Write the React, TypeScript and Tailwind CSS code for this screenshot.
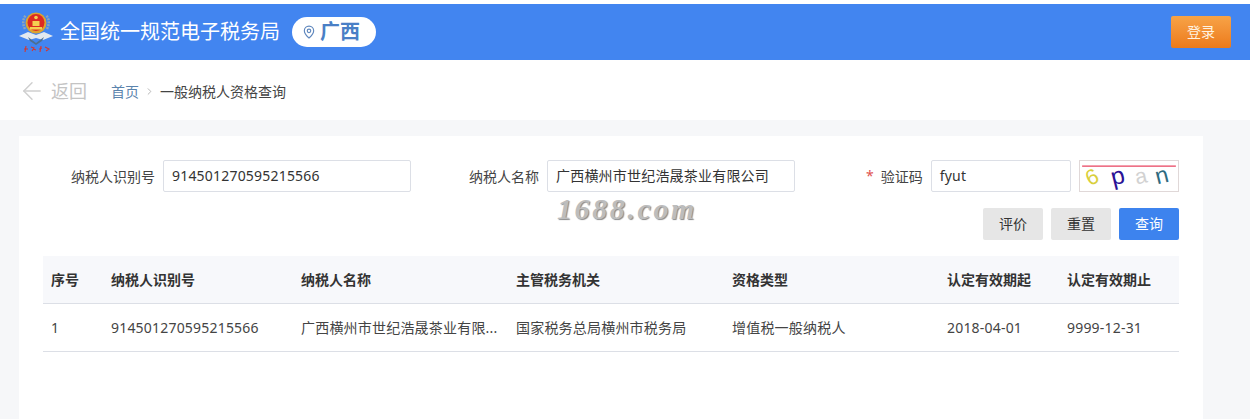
import React from 'react';
import { ArrowLeft, ChevronRight, MapPin } from 'lucide-react';

const FONT = 'font-["Noto_Sans","Noto_Sans_CJK_SC",sans-serif]';

const columns = ['序号', '纳税人识别号', '纳税人名称', '主管税务机关', '资格类型', '认定有效期起', '认定有效期止'];
const row = ['1', '914501270595215566', '广西横州市世纪浩晟茶业有限...', '国家税务总局横州市税务局', '增值税一般纳税人', '2018-04-01', '9999-12-31'];
const grid = 'grid grid-cols-[60px_190px_215px_216px_215px_120px_120px]';

const Emblem = () => (
  <svg width="34" height="46" viewBox="0 0 34 46" className="shrink-0">
    <path d="M6 20 Q2 12 7 6 M28 20 Q32 12 27 6" fill="none" stroke="#8fa6b8" strokeWidth="2.5" strokeDasharray="2 1" />
    <path d="M0 27 L9 23 L17 26 L25 23 L34 27 L24 31 L17 29 L10 31 Z" fill="#e3e9ef" />
    <path d="M9 28 L17 34 L25 28 L23 32 L17 36 L11 32 Z" fill="#4d6f90" />
    <circle cx="17" cy="14" r="10.5" fill="#dca32f" />
    <circle cx="17" cy="13.5" r="8.5" fill="#dd2a22" />
    <path d="M11 18 H23 V20.5 H11 Z" fill="#f4cf52" />
    <path d="M13.5 12 H20.5 V17 H13.5 Z" fill="#f4cf52" />
    <circle cx="17" cy="8.5" r="1.8" fill="#f4cf52" />
    <path d="M5 40 H9 M7 37 L6 43 M12 38 L15 39 L13 42 M14 40 L17 41 M20 40 L23 39 M22 37 L21 43 M26 38 L30 40 L27 42" stroke="#d9352b" strokeWidth="1.1" fill="none" />
  </svg>
);

const Captcha = () => (
  <svg width="100" height="32" viewBox="0 0 100 32" className="border border-[#e0d8d8] shrink-0 bg-white">
    <text transform="translate(8 27) rotate(-26)" fontFamily="Liberation Sans" fontSize="23" fill="#d9cf3c">6</text>
    <text transform="translate(33 26) rotate(-14)" fontFamily="Liberation Sans" fontSize="26" fill="#2a1296">p</text>
    <text transform="translate(58 25) rotate(-12)" fontFamily="Liberation Sans" fontSize="23" fill="#d2d2d2">a</text>
    <text transform="translate(80 25) rotate(-14)" fontFamily="Liberation Sans" fontSize="25" fill="#2f6b80">n</text>
    <path d="M0 5.5 H100" stroke="#e8425f" strokeWidth="1.5" />
  </svg>
);

const Field = ({ label, value, width, required }: { label: string; value: string; width: string; required?: boolean }) => (
  <div className="flex items-center">
    {required && <span className="text-[#e0524f] mr-[7px] text-sm">*</span>}
    <span className="text-[#444] text-[14px] mr-2 whitespace-nowrap">{label}</span>
    <div className={`${width} h-8 border border-[#dcdfe6] rounded-[2px] flex items-center px-2 pb-px text-[14px] text-[#333] tracking-[0.2px] bg-white`}>
      {value}
    </div>
  </div>
);

const App = () => {
  return (
    <div className={`${FONT} w-[1250px] h-[419px] overflow-hidden bg-[#f6f7f9] relative`}>
      <div className="h-1 bg-white" />
      <header className="h-14 bg-[#4285f0] flex items-center justify-between pl-[19px] pr-[19px]">
        <div className="flex items-center">
          <Emblem />
          <span className="text-white text-[20px] ml-[7px]">全国统一规范电子税务局</span>
          <div className="ml-3 w-[84px] h-[30px] bg-white rounded-full flex items-center pl-2.5 gap-1">
            <MapPin size={14} className="text-[#5f87bd]" />
            <span className="text-[#4a7fc6] text-[20px] font-semibold leading-none">广西</span>
          </div>
        </div>
        <button className="w-[60px] h-8 rounded-[2px] bg-gradient-to-b from-[#f7a346] to-[#ec7a18] text-[#fff3e0] text-sm">登录</button>
      </header>

      <div className="h-[60px] bg-white flex items-center pl-[18px] pt-[2px]">
        <ArrowLeft size={28} strokeWidth={1.25} className="text-[#cfcfcf]" />
        <span className="text-[#c4c4c4] text-lg ml-[5px]">返回</span>
        <span className="text-[#5b84ad] text-[14px] ml-6">首页</span>
        <ChevronRight size={11} className="text-[#b0b0b0] mx-[5px]" />
        <span className="text-[#444] text-[14px]">一般纳税人资格查询</span>
      </div>

      <main className="ml-[19px] mt-4 w-[1184px] h-[283px] bg-white px-6 pt-6">
        <div className="flex items-center pl-[28px]">
          <Field label="纳税人识别号" value="914501270595215566" width="w-[248px]" />
          <div className="ml-[58px]">
            <Field label="纳税人名称" value="广西横州市世纪浩晟茶业有限公司" width="w-[248px]" />
          </div>
          <div className="flex items-center gap-2 ml-[71px]">
            <Field label="验证码" value="fyut" width="w-[140px]" required />
            <Captcha />
          </div>
        </div>

        <div className="flex justify-end gap-2 mt-4">
          <button className="w-[60px] h-8 rounded-[2px] bg-[#e6e6e6] text-[#333] text-sm">评价</button>
          <button className="w-[60px] h-8 rounded-[2px] bg-[#e6e6e6] text-[#333] text-sm">重置</button>
          <button className="w-[60px] h-8 rounded-[2px] bg-[#3d83ee] text-white text-sm">查询</button>
        </div>

        <div className="mt-4">
          <div className={`${grid} h-12 items-center bg-[#f7f8fb] border-b border-[#dcdfe6]`}>
            {columns.map(c => (
              <div key={c} className="pl-2 text-[14px] font-bold text-[#333]">{c}</div>
            ))}
          </div>
          <div className={`${grid} h-12 items-center border-b border-[#dcdfe6]`}>
            {row.map(c => (
              <div key={c} className="pl-2 text-[14px] tracking-[0.2px] text-[#444] whitespace-nowrap">{c}</div>
            ))}
          </div>
        </div>
      </main>

      <div className="absolute left-[557px] top-[191px] text-[30px] leading-[36px] font-bold italic tracking-[2.6px] text-[#bdbdbd] [font-family:'Liberation_Serif',serif] [text-shadow:1px_1px_1px_#888]">
        1688.com
      </div>
    </div>
  );
};

export default App;
